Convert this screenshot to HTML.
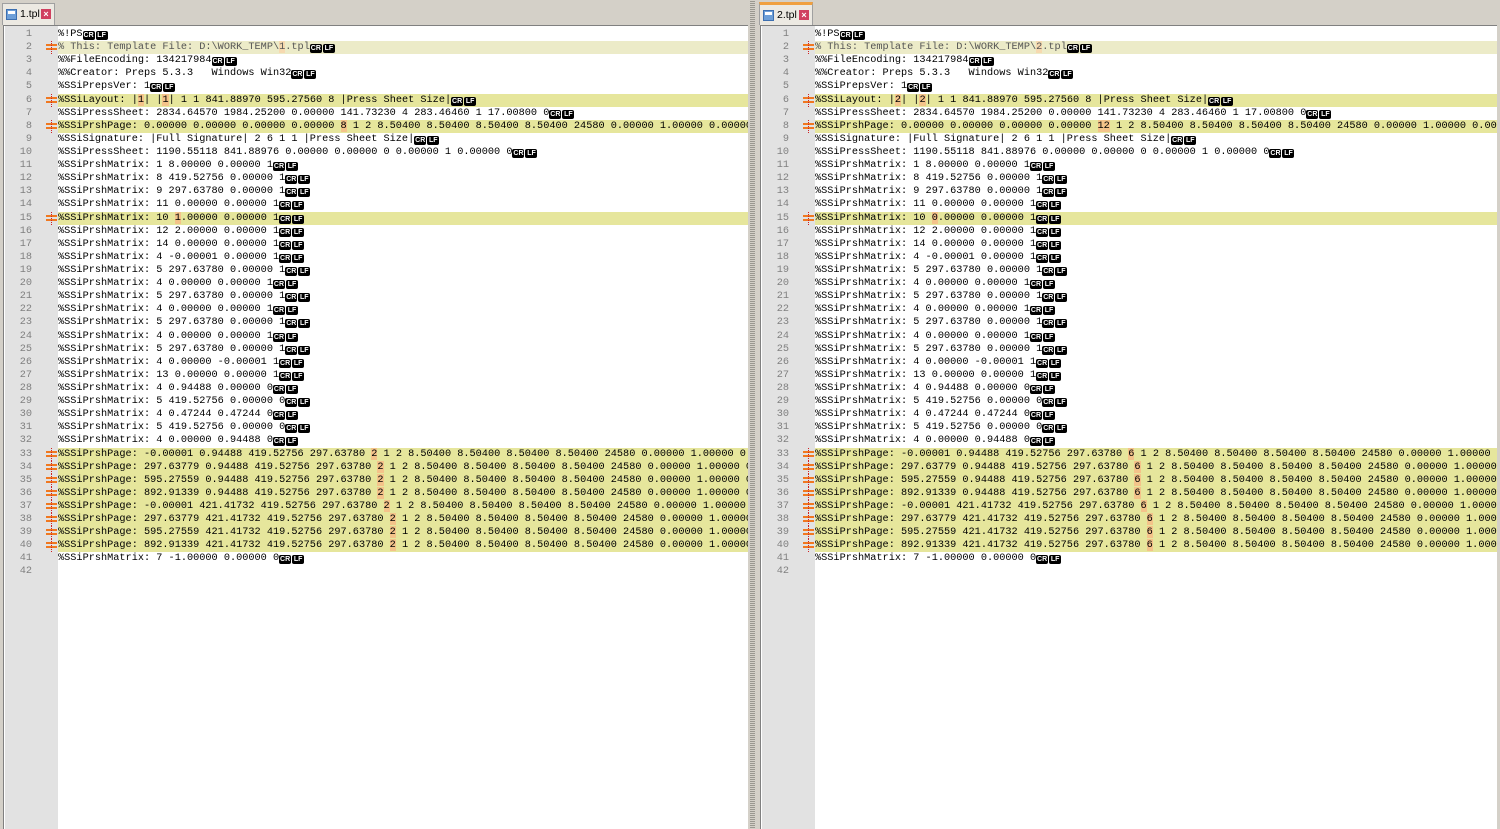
<!DOCTYPE html>
<html><head><meta charset="utf-8"><style>
*{margin:0;padding:0;box-sizing:border-box}
body{width:1500px;height:829px;background:#d4d0c8;position:relative;overflow:hidden;font-family:"Liberation Sans",sans-serif}
.pane{position:absolute;top:25px;bottom:0;background:#fff;border-left:1px solid #808080;border-top:1px solid #808080;overflow:hidden}
.gut{position:absolute;left:1px;top:0;bottom:0;width:53px;background:#e2e2e2}
.lines{position:absolute;left:0;top:2px;right:0}
.l{position:relative;height:13.12px;line-height:13.12px;font-family:"Liberation Mono",monospace;font-size:10.24px;color:#000;white-space:pre}
.l .n{position:absolute;left:0;width:28px;text-align:right;color:#808080}
.l .t{position:absolute;left:54px;right:0;padding-left:0}
.h .t{background:#e6e69c}
.h2 .t{background:#ecebc8}
.d{background:#f4c38a}
.h2 .d{background:#f6d9b0;color:#555}
.h2 .t{color:#555}
.c{display:inline-block;background:#000;color:#fff;font-family:"Liberation Sans",sans-serif;font-size:7px;font-weight:bold;line-height:9px;height:9px;width:12px;text-align:center;border-radius:2px;margin-right:1px;vertical-align:-1px}
.m{position:absolute;left:40px;top:0}
.tab{position:absolute;top:3px;height:22px;background:#ece9e2;border:1px solid #a0a0a0;border-bottom:none;font-size:10.5px;line-height:20px;padding-left:17px;white-space:nowrap}
.tab .ic{position:absolute;left:3px;top:5px;width:11px;height:11px;background:#6d9fd8;border:1px solid #3d6fb0}
.tab .ic:after{content:"";position:absolute;left:1px;top:1px;width:7px;height:3px;background:#fff}
.tab .x{position:absolute;right:3px;top:5px;width:10px;height:10px;background:#d04060;color:#fff;font-size:9px;line-height:10px;text-align:center;font-weight:bold}
.split{position:absolute;left:748px;top:0;width:9px;bottom:0;background:repeating-linear-gradient(#d4d0c8 0 1px,#9a9890 1px 2px);border-left:2px solid #d4d0c8;border-right:2px solid #d4d0c8}
</style></head><body>
<div class="tab" style="left:2px;width:53px">1.tpl<div class="ic"></div><div class="x">×</div></div>
<div class="tab" style="left:759px;width:54px;border-top:3px solid #f0a040;top:2px;height:23px">2.tpl<div class="ic"></div><div class="x">×</div></div>
<div class="split"></div>
<svg width="0" height="0" style="position:absolute"><defs><g id="mk"><rect x="2" y="3" width="11" height="2" fill="#f07820"/><rect x="2" y="7" width="11" height="2" fill="#f07820"/><line x1="7.5" y1="0" x2="7.5" y2="14" stroke="#d02020" stroke-width="1" stroke-dasharray="1 1"/></g></defs></svg>

<div class="pane" style="left:3px;width:745px"><div class="gut"></div><div class="lines">
<div class="l"><span class="n">1</span><span class="t">%!PS<span class="c">CR</span><span class="c">LF</span></span></div>
<div class="l h2"><span class="n">2</span><svg class="m" width="15" height="13"><use href="#mk"/></svg><span class="t">% This: Template File: D:\WORK_TEMP\<span class="d">1</span>.tpl<span class="c">CR</span><span class="c">LF</span></span></div>
<div class="l"><span class="n">3</span><span class="t">%%FileEncoding: 134217984<span class="c">CR</span><span class="c">LF</span></span></div>
<div class="l"><span class="n">4</span><span class="t">%%Creator: Preps 5.3.3   Windows Win32<span class="c">CR</span><span class="c">LF</span></span></div>
<div class="l"><span class="n">5</span><span class="t">%SSiPrepsVer: 1<span class="c">CR</span><span class="c">LF</span></span></div>
<div class="l h"><span class="n">6</span><svg class="m" width="15" height="13"><use href="#mk"/></svg><span class="t">%SSiLayout: |<span class="d">1</span>| |<span class="d">1</span>| 1 1 841.88970 595.27560 8 |Press Sheet Size|<span class="c">CR</span><span class="c">LF</span></span></div>
<div class="l"><span class="n">7</span><span class="t">%SSiPressSheet: 2834.64570 1984.25200 0.00000 141.73230 4 283.46460 1 17.00800 0<span class="c">CR</span><span class="c">LF</span></span></div>
<div class="l h"><span class="n">8</span><svg class="m" width="15" height="13"><use href="#mk"/></svg><span class="t">%SSiPrshPage: 0.00000 0.00000 0.00000 0.00000 <span class="d">8</span> 1 2 8.50400 8.50400 8.50400 8.50400 24580 0.00000 1.00000 0.00000</span></div>
<div class="l"><span class="n">9</span><span class="t">%SSiSignature: |Full Signature| 2 6 1 1 |Press Sheet Size|<span class="c">CR</span><span class="c">LF</span></span></div>
<div class="l"><span class="n">10</span><span class="t">%SSiPressSheet: 1190.55118 841.88976 0.00000 0.00000 0 0.00000 1 0.00000 0<span class="c">CR</span><span class="c">LF</span></span></div>
<div class="l"><span class="n">11</span><span class="t">%SSiPrshMatrix: 1 8.00000 0.00000 1<span class="c">CR</span><span class="c">LF</span></span></div>
<div class="l"><span class="n">12</span><span class="t">%SSiPrshMatrix: 8 419.52756 0.00000 1<span class="c">CR</span><span class="c">LF</span></span></div>
<div class="l"><span class="n">13</span><span class="t">%SSiPrshMatrix: 9 297.63780 0.00000 1<span class="c">CR</span><span class="c">LF</span></span></div>
<div class="l"><span class="n">14</span><span class="t">%SSiPrshMatrix: 11 0.00000 0.00000 1<span class="c">CR</span><span class="c">LF</span></span></div>
<div class="l h"><span class="n">15</span><svg class="m" width="15" height="13"><use href="#mk"/></svg><span class="t">%SSiPrshMatrix: 10 <span class="d">1</span>.00000 0.00000 1<span class="c">CR</span><span class="c">LF</span></span></div>
<div class="l"><span class="n">16</span><span class="t">%SSiPrshMatrix: 12 2.00000 0.00000 1<span class="c">CR</span><span class="c">LF</span></span></div>
<div class="l"><span class="n">17</span><span class="t">%SSiPrshMatrix: 14 0.00000 0.00000 1<span class="c">CR</span><span class="c">LF</span></span></div>
<div class="l"><span class="n">18</span><span class="t">%SSiPrshMatrix: 4 -0.00001 0.00000 1<span class="c">CR</span><span class="c">LF</span></span></div>
<div class="l"><span class="n">19</span><span class="t">%SSiPrshMatrix: 5 297.63780 0.00000 1<span class="c">CR</span><span class="c">LF</span></span></div>
<div class="l"><span class="n">20</span><span class="t">%SSiPrshMatrix: 4 0.00000 0.00000 1<span class="c">CR</span><span class="c">LF</span></span></div>
<div class="l"><span class="n">21</span><span class="t">%SSiPrshMatrix: 5 297.63780 0.00000 1<span class="c">CR</span><span class="c">LF</span></span></div>
<div class="l"><span class="n">22</span><span class="t">%SSiPrshMatrix: 4 0.00000 0.00000 1<span class="c">CR</span><span class="c">LF</span></span></div>
<div class="l"><span class="n">23</span><span class="t">%SSiPrshMatrix: 5 297.63780 0.00000 1<span class="c">CR</span><span class="c">LF</span></span></div>
<div class="l"><span class="n">24</span><span class="t">%SSiPrshMatrix: 4 0.00000 0.00000 1<span class="c">CR</span><span class="c">LF</span></span></div>
<div class="l"><span class="n">25</span><span class="t">%SSiPrshMatrix: 5 297.63780 0.00000 1<span class="c">CR</span><span class="c">LF</span></span></div>
<div class="l"><span class="n">26</span><span class="t">%SSiPrshMatrix: 4 0.00000 -0.00001 1<span class="c">CR</span><span class="c">LF</span></span></div>
<div class="l"><span class="n">27</span><span class="t">%SSiPrshMatrix: 13 0.00000 0.00000 1<span class="c">CR</span><span class="c">LF</span></span></div>
<div class="l"><span class="n">28</span><span class="t">%SSiPrshMatrix: 4 0.94488 0.00000 0<span class="c">CR</span><span class="c">LF</span></span></div>
<div class="l"><span class="n">29</span><span class="t">%SSiPrshMatrix: 5 419.52756 0.00000 0<span class="c">CR</span><span class="c">LF</span></span></div>
<div class="l"><span class="n">30</span><span class="t">%SSiPrshMatrix: 4 0.47244 0.47244 0<span class="c">CR</span><span class="c">LF</span></span></div>
<div class="l"><span class="n">31</span><span class="t">%SSiPrshMatrix: 5 419.52756 0.00000 0<span class="c">CR</span><span class="c">LF</span></span></div>
<div class="l"><span class="n">32</span><span class="t">%SSiPrshMatrix: 4 0.00000 0.94488 0<span class="c">CR</span><span class="c">LF</span></span></div>
<div class="l h"><span class="n">33</span><svg class="m" width="15" height="13"><use href="#mk"/></svg><span class="t">%SSiPrshPage: -0.00001 0.94488 419.52756 297.63780 <span class="d">2</span> 1 2 8.50400 8.50400 8.50400 8.50400 24580 0.00000 1.00000 0.00000</span></div>
<div class="l h"><span class="n">34</span><svg class="m" width="15" height="13"><use href="#mk"/></svg><span class="t">%SSiPrshPage: 297.63779 0.94488 419.52756 297.63780 <span class="d">2</span> 1 2 8.50400 8.50400 8.50400 8.50400 24580 0.00000 1.00000 0.00000</span></div>
<div class="l h"><span class="n">35</span><svg class="m" width="15" height="13"><use href="#mk"/></svg><span class="t">%SSiPrshPage: 595.27559 0.94488 419.52756 297.63780 <span class="d">2</span> 1 2 8.50400 8.50400 8.50400 8.50400 24580 0.00000 1.00000 0.00000</span></div>
<div class="l h"><span class="n">36</span><svg class="m" width="15" height="13"><use href="#mk"/></svg><span class="t">%SSiPrshPage: 892.91339 0.94488 419.52756 297.63780 <span class="d">2</span> 1 2 8.50400 8.50400 8.50400 8.50400 24580 0.00000 1.00000 0.00000</span></div>
<div class="l h"><span class="n">37</span><svg class="m" width="15" height="13"><use href="#mk"/></svg><span class="t">%SSiPrshPage: -0.00001 421.41732 419.52756 297.63780 <span class="d">2</span> 1 2 8.50400 8.50400 8.50400 8.50400 24580 0.00000 1.00000 0.00000</span></div>
<div class="l h"><span class="n">38</span><svg class="m" width="15" height="13"><use href="#mk"/></svg><span class="t">%SSiPrshPage: 297.63779 421.41732 419.52756 297.63780 <span class="d">2</span> 1 2 8.50400 8.50400 8.50400 8.50400 24580 0.00000 1.00000 0.00000</span></div>
<div class="l h"><span class="n">39</span><svg class="m" width="15" height="13"><use href="#mk"/></svg><span class="t">%SSiPrshPage: 595.27559 421.41732 419.52756 297.63780 <span class="d">2</span> 1 2 8.50400 8.50400 8.50400 8.50400 24580 0.00000 1.00000 0.00000</span></div>
<div class="l h"><span class="n">40</span><svg class="m" width="15" height="13"><use href="#mk"/></svg><span class="t">%SSiPrshPage: 892.91339 421.41732 419.52756 297.63780 <span class="d">2</span> 1 2 8.50400 8.50400 8.50400 8.50400 24580 0.00000 1.00000 0.00000</span></div>
<div class="l"><span class="n">41</span><span class="t">%SSiPrshMatrix: 7 -1.00000 0.00000 0<span class="c">CR</span><span class="c">LF</span></span></div>
<div class="l"><span class="n">42</span><span class="t"></span></div>
</div></div>

<div class="pane" style="left:760px;width:737px"><div class="gut"></div><div class="lines">
<div class="l"><span class="n">1</span><span class="t">%!PS<span class="c">CR</span><span class="c">LF</span></span></div>
<div class="l h2"><span class="n">2</span><svg class="m" width="15" height="13"><use href="#mk"/></svg><span class="t">% This: Template File: D:\WORK_TEMP\<span class="d">2</span>.tpl<span class="c">CR</span><span class="c">LF</span></span></div>
<div class="l"><span class="n">3</span><span class="t">%%FileEncoding: 134217984<span class="c">CR</span><span class="c">LF</span></span></div>
<div class="l"><span class="n">4</span><span class="t">%%Creator: Preps 5.3.3   Windows Win32<span class="c">CR</span><span class="c">LF</span></span></div>
<div class="l"><span class="n">5</span><span class="t">%SSiPrepsVer: 1<span class="c">CR</span><span class="c">LF</span></span></div>
<div class="l h"><span class="n">6</span><svg class="m" width="15" height="13"><use href="#mk"/></svg><span class="t">%SSiLayout: |<span class="d">2</span>| |<span class="d">2</span>| 1 1 841.88970 595.27560 8 |Press Sheet Size|<span class="c">CR</span><span class="c">LF</span></span></div>
<div class="l"><span class="n">7</span><span class="t">%SSiPressSheet: 2834.64570 1984.25200 0.00000 141.73230 4 283.46460 1 17.00800 0<span class="c">CR</span><span class="c">LF</span></span></div>
<div class="l h"><span class="n">8</span><svg class="m" width="15" height="13"><use href="#mk"/></svg><span class="t">%SSiPrshPage: 0.00000 0.00000 0.00000 0.00000 <span class="d">12</span> 1 2 8.50400 8.50400 8.50400 8.50400 24580 0.00000 1.00000 0.00000</span></div>
<div class="l"><span class="n">9</span><span class="t">%SSiSignature: |Full Signature| 2 6 1 1 |Press Sheet Size|<span class="c">CR</span><span class="c">LF</span></span></div>
<div class="l"><span class="n">10</span><span class="t">%SSiPressSheet: 1190.55118 841.88976 0.00000 0.00000 0 0.00000 1 0.00000 0<span class="c">CR</span><span class="c">LF</span></span></div>
<div class="l"><span class="n">11</span><span class="t">%SSiPrshMatrix: 1 8.00000 0.00000 1<span class="c">CR</span><span class="c">LF</span></span></div>
<div class="l"><span class="n">12</span><span class="t">%SSiPrshMatrix: 8 419.52756 0.00000 1<span class="c">CR</span><span class="c">LF</span></span></div>
<div class="l"><span class="n">13</span><span class="t">%SSiPrshMatrix: 9 297.63780 0.00000 1<span class="c">CR</span><span class="c">LF</span></span></div>
<div class="l"><span class="n">14</span><span class="t">%SSiPrshMatrix: 11 0.00000 0.00000 1<span class="c">CR</span><span class="c">LF</span></span></div>
<div class="l h"><span class="n">15</span><svg class="m" width="15" height="13"><use href="#mk"/></svg><span class="t">%SSiPrshMatrix: 10 <span class="d">0</span>.00000 0.00000 1<span class="c">CR</span><span class="c">LF</span></span></div>
<div class="l"><span class="n">16</span><span class="t">%SSiPrshMatrix: 12 2.00000 0.00000 1<span class="c">CR</span><span class="c">LF</span></span></div>
<div class="l"><span class="n">17</span><span class="t">%SSiPrshMatrix: 14 0.00000 0.00000 1<span class="c">CR</span><span class="c">LF</span></span></div>
<div class="l"><span class="n">18</span><span class="t">%SSiPrshMatrix: 4 -0.00001 0.00000 1<span class="c">CR</span><span class="c">LF</span></span></div>
<div class="l"><span class="n">19</span><span class="t">%SSiPrshMatrix: 5 297.63780 0.00000 1<span class="c">CR</span><span class="c">LF</span></span></div>
<div class="l"><span class="n">20</span><span class="t">%SSiPrshMatrix: 4 0.00000 0.00000 1<span class="c">CR</span><span class="c">LF</span></span></div>
<div class="l"><span class="n">21</span><span class="t">%SSiPrshMatrix: 5 297.63780 0.00000 1<span class="c">CR</span><span class="c">LF</span></span></div>
<div class="l"><span class="n">22</span><span class="t">%SSiPrshMatrix: 4 0.00000 0.00000 1<span class="c">CR</span><span class="c">LF</span></span></div>
<div class="l"><span class="n">23</span><span class="t">%SSiPrshMatrix: 5 297.63780 0.00000 1<span class="c">CR</span><span class="c">LF</span></span></div>
<div class="l"><span class="n">24</span><span class="t">%SSiPrshMatrix: 4 0.00000 0.00000 1<span class="c">CR</span><span class="c">LF</span></span></div>
<div class="l"><span class="n">25</span><span class="t">%SSiPrshMatrix: 5 297.63780 0.00000 1<span class="c">CR</span><span class="c">LF</span></span></div>
<div class="l"><span class="n">26</span><span class="t">%SSiPrshMatrix: 4 0.00000 -0.00001 1<span class="c">CR</span><span class="c">LF</span></span></div>
<div class="l"><span class="n">27</span><span class="t">%SSiPrshMatrix: 13 0.00000 0.00000 1<span class="c">CR</span><span class="c">LF</span></span></div>
<div class="l"><span class="n">28</span><span class="t">%SSiPrshMatrix: 4 0.94488 0.00000 0<span class="c">CR</span><span class="c">LF</span></span></div>
<div class="l"><span class="n">29</span><span class="t">%SSiPrshMatrix: 5 419.52756 0.00000 0<span class="c">CR</span><span class="c">LF</span></span></div>
<div class="l"><span class="n">30</span><span class="t">%SSiPrshMatrix: 4 0.47244 0.47244 0<span class="c">CR</span><span class="c">LF</span></span></div>
<div class="l"><span class="n">31</span><span class="t">%SSiPrshMatrix: 5 419.52756 0.00000 0<span class="c">CR</span><span class="c">LF</span></span></div>
<div class="l"><span class="n">32</span><span class="t">%SSiPrshMatrix: 4 0.00000 0.94488 0<span class="c">CR</span><span class="c">LF</span></span></div>
<div class="l h"><span class="n">33</span><svg class="m" width="15" height="13"><use href="#mk"/></svg><span class="t">%SSiPrshPage: -0.00001 0.94488 419.52756 297.63780 <span class="d">6</span> 1 2 8.50400 8.50400 8.50400 8.50400 24580 0.00000 1.00000 0.00000</span></div>
<div class="l h"><span class="n">34</span><svg class="m" width="15" height="13"><use href="#mk"/></svg><span class="t">%SSiPrshPage: 297.63779 0.94488 419.52756 297.63780 <span class="d">6</span> 1 2 8.50400 8.50400 8.50400 8.50400 24580 0.00000 1.00000 0.00000</span></div>
<div class="l h"><span class="n">35</span><svg class="m" width="15" height="13"><use href="#mk"/></svg><span class="t">%SSiPrshPage: 595.27559 0.94488 419.52756 297.63780 <span class="d">6</span> 1 2 8.50400 8.50400 8.50400 8.50400 24580 0.00000 1.00000 0.00000</span></div>
<div class="l h"><span class="n">36</span><svg class="m" width="15" height="13"><use href="#mk"/></svg><span class="t">%SSiPrshPage: 892.91339 0.94488 419.52756 297.63780 <span class="d">6</span> 1 2 8.50400 8.50400 8.50400 8.50400 24580 0.00000 1.00000 0.00000</span></div>
<div class="l h"><span class="n">37</span><svg class="m" width="15" height="13"><use href="#mk"/></svg><span class="t">%SSiPrshPage: -0.00001 421.41732 419.52756 297.63780 <span class="d">6</span> 1 2 8.50400 8.50400 8.50400 8.50400 24580 0.00000 1.00000 0.00000</span></div>
<div class="l h"><span class="n">38</span><svg class="m" width="15" height="13"><use href="#mk"/></svg><span class="t">%SSiPrshPage: 297.63779 421.41732 419.52756 297.63780 <span class="d">6</span> 1 2 8.50400 8.50400 8.50400 8.50400 24580 0.00000 1.00000 0.00000</span></div>
<div class="l h"><span class="n">39</span><svg class="m" width="15" height="13"><use href="#mk"/></svg><span class="t">%SSiPrshPage: 595.27559 421.41732 419.52756 297.63780 <span class="d">6</span> 1 2 8.50400 8.50400 8.50400 8.50400 24580 0.00000 1.00000 0.00000</span></div>
<div class="l h"><span class="n">40</span><svg class="m" width="15" height="13"><use href="#mk"/></svg><span class="t">%SSiPrshPage: 892.91339 421.41732 419.52756 297.63780 <span class="d">6</span> 1 2 8.50400 8.50400 8.50400 8.50400 24580 0.00000 1.00000 0.00000</span></div>
<div class="l"><span class="n">41</span><span class="t">%SSiPrshMatrix: 7 -1.00000 0.00000 0<span class="c">CR</span><span class="c">LF</span></span></div>
<div class="l"><span class="n">42</span><span class="t"></span></div>
</div></div>
</body></html>
